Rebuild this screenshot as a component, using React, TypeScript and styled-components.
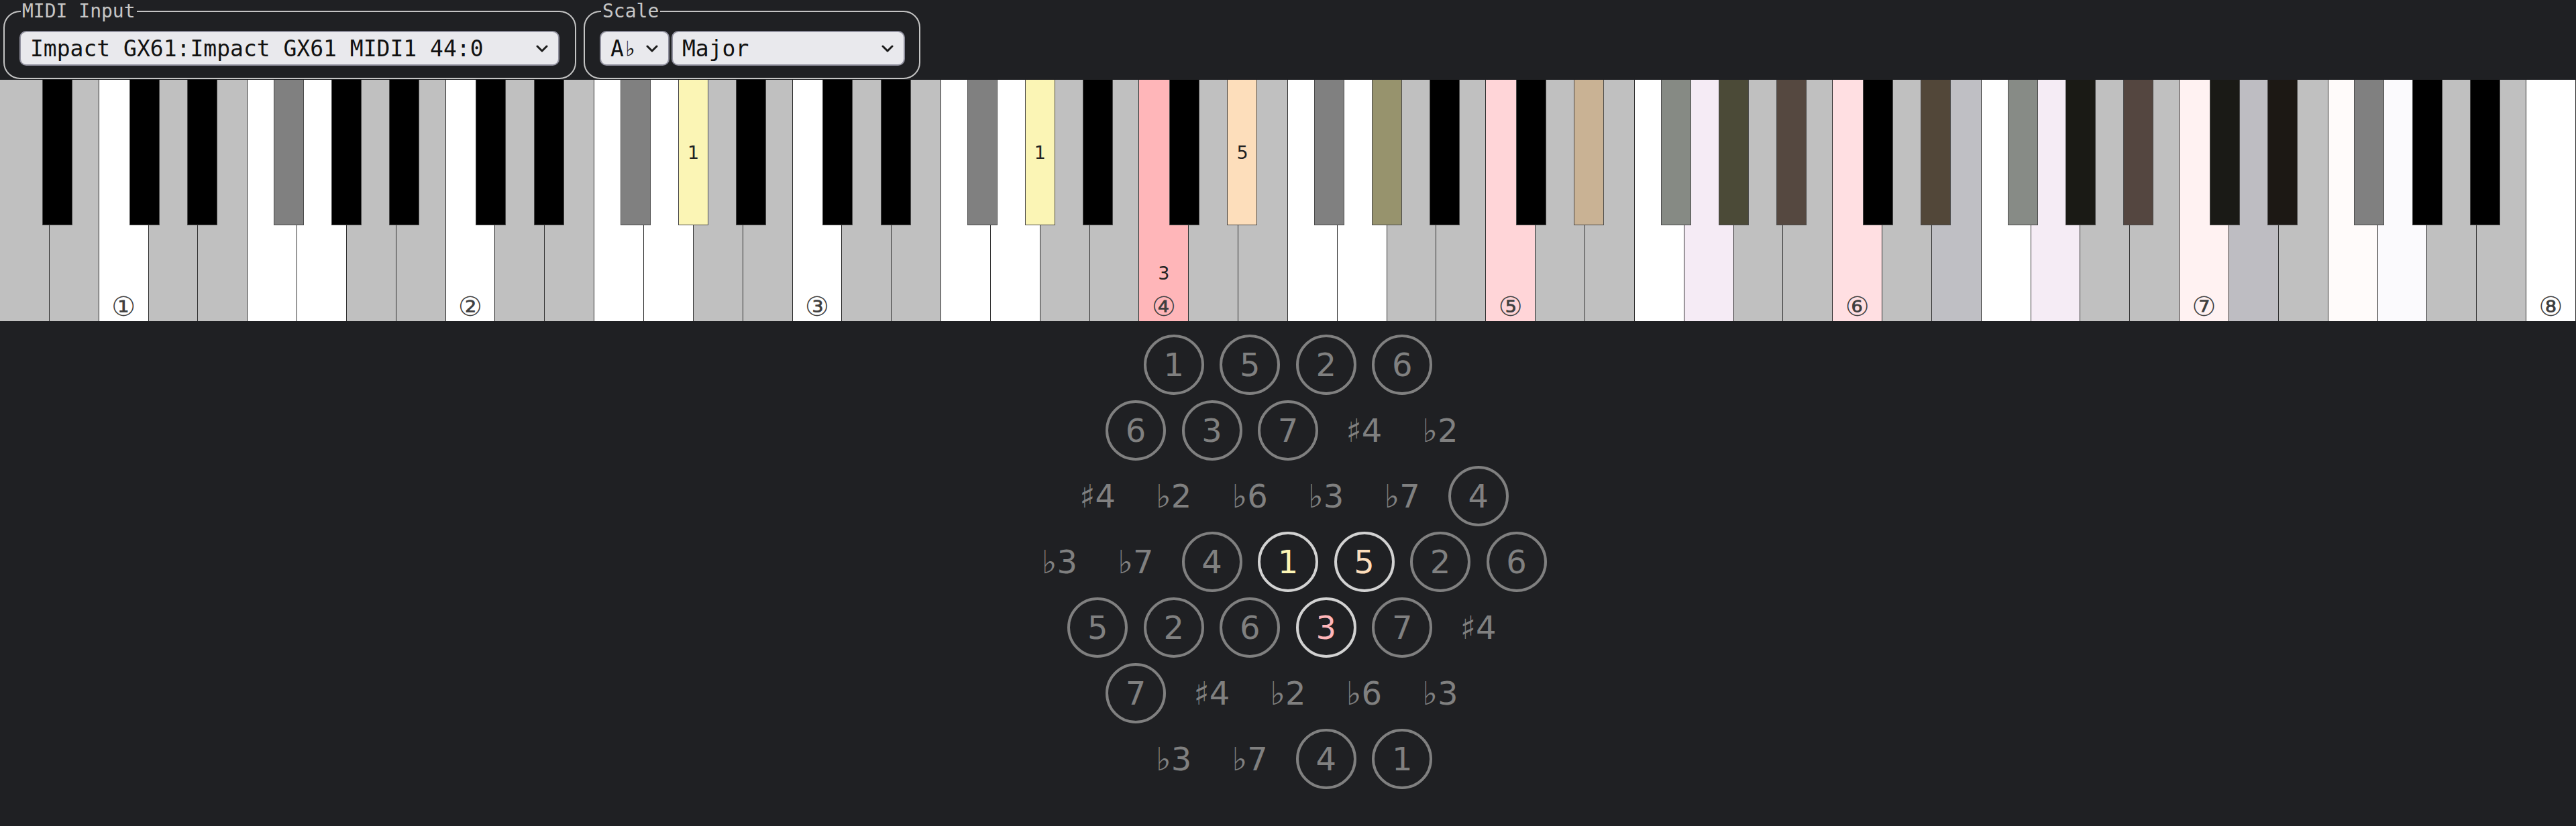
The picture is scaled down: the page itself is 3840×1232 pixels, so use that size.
import React from 'react';
import styled, { createGlobalStyle } from 'styled-components';

const GlobalStyle = createGlobalStyle`
  html, body { margin: 0; padding: 0; background: #1f2023; }
  body { width: 3840px; height: 1232px; overflow: hidden; font-family: "DejaVu Sans", sans-serif; }
  #root { width: 3840px; height: 1232px; }
`;

const Page = styled.div`
  display: flex;
  flex-direction: column;
  width: 3840px;
  height: 1232px;
  background: #1f2023;
`;

const Header = styled.header`
  display: flex;
  gap: 11px;
  padding: 0 0 0 5px;
  height: 119px;
  box-sizing: border-box;
  align-items: flex-start;
  flex: none;
`;

const Group = styled.fieldset<{ $width: number }>`
  margin: 0;
  min-width: 0;
  width: ${(p) => p.$width}px;
  height: 118px;
  box-sizing: border-box;
  border: 2px solid #c4c4c4;
  border-radius: 25px;
  padding: 12px 23px 0 22px;
  display: flex;
  gap: 3px;
  align-items: flex-start;
`;

const Legend = styled.legend`
  font-family: "DejaVu Sans Mono", monospace;
  font-size: 28px;
  line-height: 34px;
  color: #c6c6c6;
  padding: 0 2px;
  margin-left: 2px;
`;

const SelectBox = styled.div<{ $width: number }>`
  box-sizing: border-box;
  width: ${(p) => p.$width}px;
  height: 52px;
  flex: none;
  display: flex;
  align-items: center;
  justify-content: space-between;
  padding: 0 15px 0 14px;
  background: #e9e9ed;
  border: 2px solid #8f8f9d;
  border-radius: 10px;
  font-family: "DejaVu Sans Mono", monospace;
  font-size: 33px;
  color: #111;
  white-space: pre;
`;

const Chevron = () => (
  <svg width="18" height="11" viewBox="0 0 18 11" fill="none">
    <path d="M2 2 L9 9 L16 2" stroke="#1b1b1b" strokeWidth="3" strokeLinecap="round" strokeLinejoin="round" />
  </svg>
);

const Keyboard = styled.div`
  position: relative;
  display: flex;
  width: 100%;
  height: 360px;
  flex: none;
  overflow: hidden;
`;

const WhiteKey = styled.div<{ $bg: string }>`
  flex: 1;
  display: grid;
  grid-template-rows: 217px 1fr;
  grid-template-columns: 1fr;
  justify-items: center;
  background: ${(p) => p.$bg};
  border-right: 1px solid #2e2e2e;
  box-sizing: border-box;
`;

const KeyLabel = styled.span`
  grid-row: 2;
  grid-column: 1;
  align-self: center;
  font-family: "DejaVu Sans", sans-serif;
  font-size: 27px;
  line-height: 1;
  color: #222;
`;

const OctaveMark = styled.span`
  grid-row: 2;
  grid-column: 1;
  align-self: end;
  margin-bottom: 2px;
  font-family: "DejaVu Sans", sans-serif;
  font-size: 40px;
  line-height: 1;
  color: #404040;
`;

const BlackKey = styled.div<{ $bg: string }>`
  position: absolute;
  top: 0;
  height: 217px;
  width: 45px;
  box-sizing: border-box;
  background: ${(p) => p.$bg};
  border: 1px solid #4a4a4a;
  border-top: none;
  display: flex;
  align-items: center;
  justify-content: center;
  font-family: "DejaVu Sans", sans-serif;
  font-size: 27px;
  color: #222;
`;

const Lattice = styled.div`
  display: grid;
  grid-template-columns: repeat(14, 56.75px);
  grid-template-rows: repeat(7, 98px);
  justify-content: center;
  margin-top: 16px;
`;

const Cell = styled.div<{ $h: number; $r: number }>`
  grid-column: ${(p) => p.$h + 1} / span 2;
  grid-row: ${(p) => p.$r};
  display: flex;
  align-items: center;
  justify-content: center;
`;

const Degree = styled.span<{ $circled: boolean; $active: boolean; $color?: string }>`
  width: 90px;
  height: 90px;
  box-sizing: border-box;
  border-radius: 50%;
  border: 4px solid ${(p) => (p.$circled ? (p.$active ? '#d2d2d2' : '#808080') : 'transparent')};
  display: flex;
  align-items: center;
  justify-content: center;
  font-family: "DejaVu Sans", sans-serif;
  font-size: 48px;
  line-height: 1;
  color: ${(p) => p.$color || '#808080'};
`;

const W = 100 / 52;
const SEMI = (7 * W) / 12;
const WHITE_NAMES = ['A', 'B', 'C', 'D', 'E', 'F', 'G'];
const IN_SCALE_WHITE = new Set(['C', 'F', 'G']);

const whiteOverride: Record<string, string> = {
  C4: '#ffb6b9',
  C5: '#ffd5d8',
  G5: '#f5ebf5',
  C6: '#ffdfe2',
  E6: '#bfbfc4',
  G6: '#f5ecf5',
  C7: '#fff2f2',
  D7: '#bebdc2',
  F7: '#fffbfa',
  G7: '#fbfafd',
};

const blackOverride: Record<string, string> = {
  'G#2': '#fbf5b5',
  'G#3': '#fbf5b5',
  'D#4': '#fddebb',
  'G#4': '#97936d',
  'D#5': '#c9b294',
  'F#5': '#868a84',
  'G#5': '#4b4a37',
  'A#5': '#554840',
  'D#6': '#524739',
  'F#6': '#878b86',
  'G#6': '#1a1a15',
  'A#6': '#544640',
  'C#7': '#1a1a16',
  'D#7': '#1c1814',
};

const keyLabels: Record<string, string> = { 'G#2': '1', 'G#3': '1', 'D#4': '5', C4: '3' };
const MARKS = ['①', '②', '③', '④', '⑤', '⑥', '⑦', '⑧'];

type WKey = { name: string; bg: string; label?: string; mark?: string };
const whiteKeys: WKey[] = Array.from({ length: 52 }, (_, i) => {
  const letter = WHITE_NAMES[i % 7];
  const octave = i < 2 ? 0 : Math.floor((i - 2) / 7) + 1;
  const name = `${letter}${octave}`;
  const bg = whiteOverride[name] || (IN_SCALE_WHITE.has(letter) ? '#ffffff' : '#c0c0c0');
  return {
    name,
    bg,
    label: keyLabels[name],
    mark: letter === 'C' ? MARKS[octave - 1] : undefined,
  };
});

type BKey = { name: string; left: number; bg: string; label?: string };
const blackKeys: BKey[] = [];
const BLACK_DEFS: [string, number][] = [
  ['C#', 1],
  ['D#', 3],
  ['F#', 6],
  ['G#', 8],
  ['A#', 10],
];
const pushBlack = (n: string, oct: number, cx: number, k: number) => {
  const name = `${n}${oct}`;
  const base = n === 'F#' ? '#808080' : '#000000';
  blackKeys.push({
    name,
    left: cx + k * SEMI + 1.8 / 38.4,
    bg: blackOverride[name] || base,
    label: keyLabels[name],
  });
};
pushBlack('A#', 0, -5 * W, 10);
for (let oct = 1; oct <= 7; oct++) {
  const cx = (2 + 7 * (oct - 1)) * W;
  BLACK_DEFS.forEach(([n, k]) => pushBlack(n, oct, cx, k));
}

type Node = { r: number; h: number; t: string; active?: string };
const ROWS: [number, [number, string][]][] = [
  [1, [[3, '1'], [5, '5'], [7, '2'], [9, '6']]],
  [2, [[2, '6'], [4, '3'], [6, '7'], [8, '♯4'], [10, '♭2']]],
  [3, [[1, '♯4'], [3, '♭2'], [5, '♭6'], [7, '♭3'], [9, '♭7'], [11, '4']]],
  [4, [[0, '♭3'], [2, '♭7'], [4, '4'], [6, '1'], [8, '5'], [10, '2'], [12, '6']]],
  [5, [[1, '5'], [3, '2'], [5, '6'], [7, '3'], [9, '7'], [11, '♯4']]],
  [6, [[2, '7'], [4, '♯4'], [6, '♭2'], [8, '♭6'], [10, '♭3']]],
  [7, [[3, '♭3'], [5, '♭7'], [7, '4'], [9, '1']]],
];
const ACTIVE: Record<string, string> = { '4-6': '#fbf5b5', '4-8': '#fddebb', '5-7': '#ffb6b9' };
const nodes: Node[] = ROWS.flatMap(([r, items]) =>
  items.map(([h, t]) => ({ r, h, t, active: ACTIVE[`${r}-${h}`] }))
);

export default function App() {
  return (
    <Page>
      <GlobalStyle />
      <Header>
        <Group $width={854}>
          <Legend>MIDI Input</Legend>
          <SelectBox $width={805}>
            <span>Impact GX61:Impact GX61 MIDI1 44:0</span>
            <Chevron />
          </SelectBox>
        </Group>
        <Group $width={502}>
          <Legend>Scale</Legend>
          <SelectBox $width={104}>
            <span>A♭</span>
            <Chevron />
          </SelectBox>
          <SelectBox $width={348}>
            <span>Major</span>
            <Chevron />
          </SelectBox>
        </Group>
      </Header>
      <Keyboard>
        {whiteKeys.map((k) => (
          <WhiteKey key={k.name} $bg={k.bg}>
            {k.label && <KeyLabel>{k.label}</KeyLabel>}
            {k.mark && <OctaveMark>{k.mark}</OctaveMark>}
          </WhiteKey>
        ))}
        {blackKeys.map((k) => (
          <BlackKey key={k.name} $bg={k.bg} style={{ left: `${k.left}%` }}>
            {k.label}
          </BlackKey>
        ))}
      </Keyboard>
      <Lattice>
        {nodes.map((n) => {
          const circled = !/[♯♭]/.test(n.t);
          return (
            <Cell key={`${n.r}-${n.h}`} $h={n.h} $r={n.r}>
              <Degree $circled={circled} $active={!!n.active} $color={n.active}>
                {n.t}
              </Degree>
            </Cell>
          );
        })}
      </Lattice>
    </Page>
  );
}
